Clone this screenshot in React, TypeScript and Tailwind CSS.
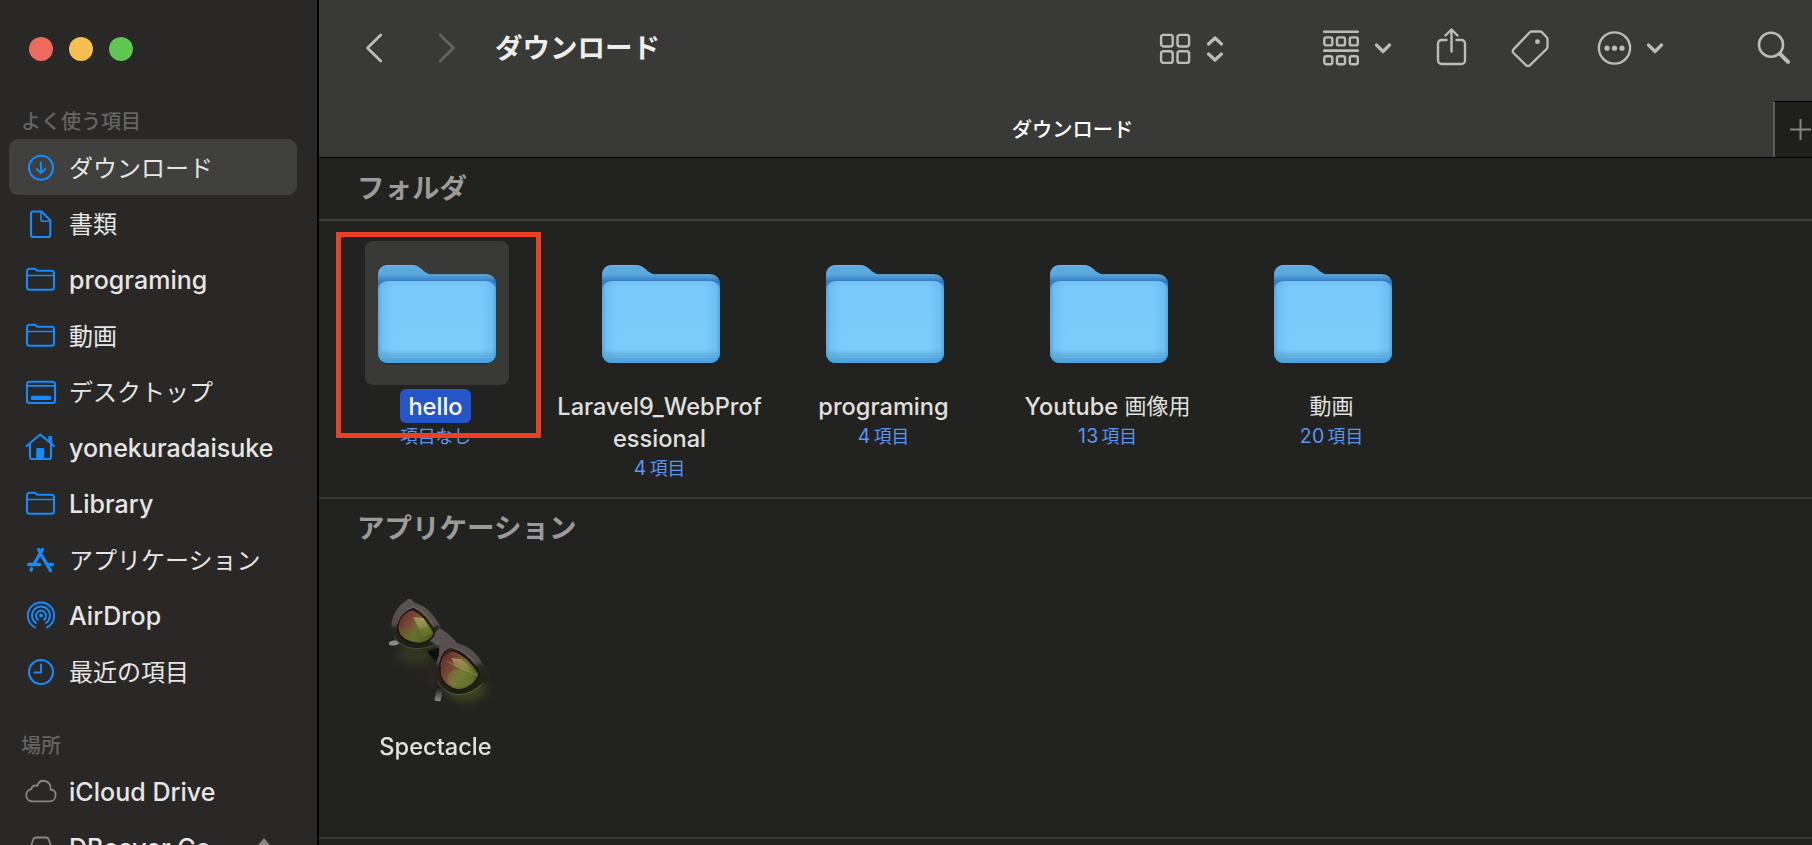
import React from "react";

type IconName = "download" | "doc" | "folder" | "desktop" | "home" | "apps" | "airdrop" | "clock" | "cloud" | "disk";

function SideIcon({ name }: { name: IconName }) {
  const common = { width: 32, height: 32, viewBox: "0 0 32 32", fill: "none", stroke: "currentColor", strokeWidth: 2.1, strokeLinecap: "round" as const, strokeLinejoin: "round" as const };
  switch (name) {
    case "download":
      return (
        <svg {...common}>
          <circle cx="16" cy="15.700" r="12" />
          <path d="M16 10.500v10.500M11.800 17l4.200 4.200 4.200-4.200" strokeWidth="1.900" />
        </svg>
      );
    case "doc":
      return (
        <svg {...common}>
          <path d="M8 3.500H16.500L25.300 12.300V27a2 2 0 0 1-2 2H8a2 2 0 0 1-2-2V5.500a2 2 0 0 1 2-2z" />
          <path d="M16 3.800v7.700a1.800 1.800 0 0 0 1.800 1.800H25" strokeWidth="1.600" />
        </svg>
      );
    case "folder":
      return (
        <svg {...common}>
          <path d="M2 7.300a2.500 2.500 0 0 1 2.500-2.500h4.500c2 0 2 2 4.500 2h13a2.500 2.500 0 0 1 2.500 2.500v14a2.500 2.500 0 0 1-2.500 2.500h-22a2.500 2.500 0 0 1-2.500-2.500z" />
          <path d="M2 11.500h27" strokeWidth="1.700" />
        </svg>
      );
    case "desktop":
      return (
        <svg {...common}>
          <rect x="2" y="5.700" width="28" height="21.300" rx="2.500" />
          <path d="M2 9.800h28" strokeWidth="1.700" />
          <rect x="6" y="19.700" width="20" height="4.300" rx="1" fill="currentColor" stroke="none" />
        </svg>
      );
    case "home":
      return (
        <svg {...common}>
          <path d="M1.500 14L15.300 2.500l13.700 11.500M24.300 9.500V5h1.700v6" />
          <path d="M5 12v13a2 2 0 0 0 2 2h17a2 2 0 0 0 2-2V12" />
          <rect x="11.200" y="16" width="8" height="11" rx="1" fill="currentColor" stroke="none" />
        </svg>
      );
    case "apps":
      return (
        <svg {...common} strokeWidth="3.300">
          <path d="M13.500 5.500l1.500 2.500M17.500 5.500L9.300 19.500M16.600 11.500L25.500 26.500M6.600 24.700l-.600 1.300M3.700 20.500h11M22.500 20.500h5" />
        </svg>
      );
    case "airdrop":
      return (
        <svg {...common} strokeWidth="1.900">
          <circle cx="16" cy="15.500" r="2" fill="currentColor" stroke="none" />
          <path d="M13 19.700a5 5 0 1 1 6 0M11 23a9 9 0 1 1 10 0M10 27.400a13.200 13.200 0 1 1 12 0" />
        </svg>
      );
    case "clock":
      return (
        <svg {...common}>
          <circle cx="16" cy="16" r="12" />
          <path d="M16 8.500v8H9.500" strokeWidth="1.900" />
        </svg>
      );
    case "cloud":
      return (
        <svg {...common} strokeWidth="1.800">
          <path d="M7 25.300a6.100 6.100 0 0 1-.700-12.100c.300-3.200 3.400-4.500 5.800-3.300 1.400-3.700 4.400-5.700 7.900-4.900 3.900.800 6.200 4.400 5.600 8.500 3.300.500 5.200 3 5 6-.300 3.300-2.700 5.800-5.600 5.800z" />
        </svg>
      );
    case "disk":
      return (
        <svg {...common} strokeWidth="1.800">
          <path d="M5 17l3-9a3.500 3.500 0 0 1 3.300-2.500h9.400a3.500 3.500 0 0 1 3.300 2.500L27 17v8H5z" />
        </svg>
      );
  }
}

const favorites: { icon: IconName; label: string; latin?: boolean; active?: boolean }[] = [
  { icon: "download", label: "ダウンロード", active: true },
  { icon: "doc", label: "書類" },
  { icon: "folder", label: "programing", latin: true },
  { icon: "folder", label: "動画" },
  { icon: "desktop", label: "デスクトップ" },
  { icon: "home", label: "yonekuradaisuke", latin: true },
  { icon: "folder", label: "Library", latin: true },
  { icon: "apps", label: "アプリケーション" },
  { icon: "airdrop", label: "AirDrop", latin: true },
  { icon: "clock", label: "最近の項目" },
];

function SideRow({ icon, label, latin, active, gray, eject }: { icon: IconName; label: string; latin?: boolean; active?: boolean; gray?: boolean; eject?: boolean }) {
  return (
    <li className={`flex h-14 shrink-0 items-center rounded-[9px] pl-4 pt-[2px] ${active ? "bg-[#40403e]" : ""}`}>
      <span className={gray ? "text-[#878786]" : "text-[#158bff]"}>
        <SideIcon name={icon} />
      </span>
      <span className={`ml-3 whitespace-nowrap text-[#e6e6e5] ${latin ? "pt-[2px] text-[25px] font-medium tracking-[0.03px]" : "pt-px text-[24px]"}`}>{label}</span>
      {eject && (
        <svg className="ml-auto mr-6" width="18" height="20" viewBox="0 0 18 20" fill="#878786">
          <path d="M9 0l8 9.500H1zM1 13h16v3H1z" />
        </svg>
      )}
    </li>
  );
}

function Sidebar() {
  return (
    <aside className="flex w-[319px] shrink-0 flex-col overflow-hidden border-r-2 border-black bg-[#292827] pl-[9px] pr-[20px]">
      <div className="flex shrink-0 gap-4 pl-5 pt-[37px]">
        <i className="size-6 rounded-full bg-[#ed6a5e]" />
        <i className="size-6 rounded-full bg-[#f5bf4f]" />
        <i className="size-6 rounded-full bg-[#61c554]" />
      </div>
      <h2 className="mt-[46px] h-[32px] shrink-0 pl-[12px] text-[20px] font-medium leading-[30px] text-[#656564]">よく使う項目</h2>
      <ul className="flex shrink-0 flex-col">
        {favorites.map((f) => (
          <SideRow key={f.label} {...f} />
        ))}
      </ul>
      <h2 className="mt-8 h-8 shrink-0 pl-[12px] text-[20px] font-medium leading-[30px] text-[#656564]">場所</h2>
      <ul className="flex shrink-0 flex-col">
        <SideRow icon="cloud" label="iCloud Drive" latin gray />
        <SideRow icon="disk" label="DBeaver Co…" latin gray eject />
      </ul>
    </aside>
  );
}

function ChevronDown() {
  return (
    <svg width="18" height="14" viewBox="0 0 18 14" fill="none" stroke="currentColor" strokeWidth="3.200" strokeLinecap="round" strokeLinejoin="round">
      <path d="M2.500 4L9 10.500l6.500-6.500" />
    </svg>
  );
}

function Toolbar() {
  return (
    <div className="flex h-24 items-center text-[#bcbcba]">
      <svg className="ml-[45px]" width="20" height="32" viewBox="0 0 20 32" fill="none" stroke="currentColor" strokeWidth="2.800" strokeLinecap="round" strokeLinejoin="round">
        <path d="M16.700 3L3.500 16 16.700 29" />
      </svg>
      <svg className="ml-[53px] text-[#636361]" width="20" height="32" viewBox="0 0 20 32" fill="none" stroke="currentColor" strokeWidth="2.800" strokeLinecap="round" strokeLinejoin="round">
        <path d="M3.300 3l13.200 13L3.300 29" />
      </svg>
      <h1 className="ml-[38px] w-[664px] text-[27.5px] font-bold leading-10 text-[#eeeeec]">ダウンロード</h1>
      <svg width="32" height="32" viewBox="0 0 32 32" fill="none" stroke="currentColor" strokeWidth="2.400">
        <rect x="2.100" y="2.900" width="11.600" height="11.600" rx="2.500" />
        <rect x="18.500" y="2.900" width="11.600" height="11.600" rx="2.500" />
        <rect x="2.100" y="19.300" width="11.600" height="11.600" rx="2.500" />
        <rect x="18.500" y="19.300" width="11.600" height="11.600" rx="2.500" />
      </svg>
      <svg className="ml-[15px]" width="18" height="32" viewBox="0 0 18 32" fill="none" stroke="currentColor" strokeWidth="3.200" strokeLinecap="round" strokeLinejoin="round">
        <path d="M2.500 12L9 6l6.500 6M2.500 22L9 28l6.500-6" />
      </svg>
      <svg className="ml-[99px]" width="36" height="36" viewBox="0 0 36 36" fill="none" stroke="currentColor" strokeWidth="2.400">
        <path d="M1.200 1.700h33.600M1.200 20.600h33.600" strokeLinecap="round" strokeWidth="2.600" />
        {[7.4, 26.2].map((y) =>
          [1.3, 14, 26.8].map((x) => <rect key={`${x}-${y}`} x={x} y={y} width="8" height="8" rx="2" />)
        )}
      </svg>
      <div className="ml-[15px]"><ChevronDown /></div>
      <svg className="ml-[43px] mb-[5px]" width="34" height="40" viewBox="0 0 34 40" fill="none" stroke="currentColor" strokeWidth="2.400" strokeLinecap="round" strokeLinejoin="round">
        <path d="M11.500 14H6.500a3.500 3.500 0 0 0-3.500 3.500v17a3.500 3.500 0 0 0 3.500 3.500h20a3.500 3.500 0 0 0 3.500-3.500v-17a3.500 3.500 0 0 0-3.500-3.500h-5" />
        <path d="M16.500 25.500V4M10.500 9.500L16.500 3.500l6 6" />
      </svg>
      <svg className="ml-[42px]" width="40" height="40" viewBox="0 0 40 40" fill="none" stroke="currentColor" strokeWidth="2.300" strokeLinejoin="round">
        <path d="M20.500 3.500h8.500a2.500 2.500 0 0 1 1.800.700l5 5a2.500 2.500 0 0 1 .700 1.800v8a2.500 2.500 0 0 1-.700 1.800L18.800 37.400a2.500 2.500 0 0 1-3.600 0L2.500 25a2.500 2.500 0 0 1 0-3.600L18.800 4.300a2.500 2.500 0 0 1 1.700-.800z" />
        <circle cx="26.500" cy="13.700" r="2.400" fill="currentColor" stroke="none" />
      </svg>
      <svg className="ml-[46px]" width="36" height="36" viewBox="0 0 36 36" fill="none" stroke="currentColor" strokeWidth="2.400">
        <circle cx="17.500" cy="18" r="15.600" />
        <g fill="currentColor" stroke="none">
          <circle cx="10" cy="18.200" r="2.600" />
          <circle cx="17.500" cy="18.200" r="2.600" />
          <circle cx="25" cy="18.200" r="2.600" />
        </g>
      </svg>
      <div className="ml-[13px]"><ChevronDown /></div>
      <svg className="ml-[92px]" width="36" height="36" viewBox="0 0 36 36" fill="none" stroke="currentColor" strokeLinecap="round">
        <circle cx="15" cy="14.700" r="12" strokeWidth="2.600" />
        <path d="M24 23.800l8 8" strokeWidth="4" />
      </svg>
    </div>
  );
}

function TabBar() {
  return (
    <div className="flex h-[61px] items-end">
      <div className="flex h-[56px] flex-1 items-center justify-center pt-[2px] text-[20.3px] font-medium text-white">
        <span className="pl-[53px]">ダウンロード</span>
      </div>
      <div className="flex h-[56px] w-[39px] justify-end border-l-2 border-t border-l-[#5b5b59] border-t-black bg-[#1f1f1d]">
        <svg width="23" height="55" viewBox="0 0 23 55" stroke="#858583" strokeWidth="2">
          <path d="M1 27.500h21M11.500 17v21" />
        </svg>
      </div>
    </div>
  );
}

function FolderIcon() {
  return (
    <svg width="144" height="144" viewBox="0 0 144 144">
      <defs>
        <linearGradient id="back" x1="0" y1="0" x2="0" y2="1">
          <stop offset="0" stopColor="#5fade0" />
          <stop offset=".1" stopColor="#58a6dc" />
          <stop offset=".17" stopColor="#3479c2" />
          <stop offset=".3" stopColor="#4b9fdb" />
          <stop offset="1" stopColor="#459bd6" />
        </linearGradient>
        <linearGradient id="front" x1="0" y1="0" x2="0" y2="1">
          <stop offset="0" stopColor="#73c2f2" />
          <stop offset=".1" stopColor="#7bcbfa" />
          <stop offset=".82" stopColor="#7dcdfb" />
          <stop offset=".87" stopColor="#72c0ef" />
          <stop offset=".88" stopColor="#65b3e3" />
          <stop offset=".9" stopColor="#70bdea" />
          <stop offset=".91" stopColor="#5eacdf" />
          <stop offset=".93" stopColor="#66b6e6" />
          <stop offset=".95" stopColor="#50a5df" />
          <stop offset="1" stopColor="#4b9fdb" />
        </linearGradient>
        <linearGradient id="side" x1="0" y1="0" x2="1" y2="0">
          <stop offset="0" stopColor="#3a90d0" stopOpacity=".65" />
          <stop offset=".03" stopColor="#4b9fdb" stopOpacity=".28" />
          <stop offset=".13" stopColor="#4b9fdb" stopOpacity="0" />
          <stop offset=".87" stopColor="#4b9fdb" stopOpacity="0" />
          <stop offset=".97" stopColor="#4b9fdb" stopOpacity=".28" />
          <stop offset="1" stopColor="#3a90d0" stopOpacity=".65" />
        </linearGradient>
      </defs>
      <rect x="14" y="60" width="116" height="63.500" rx="9" fill="#000" opacity=".25" />
      <path d="M13 33a9 9 0 0 1 9-9h25c9 0 11 9.300 20 9.300h55a9 9 0 0 1 9 9V113a9 9 0 0 1-9 9H22a9 9 0 0 1-9-9z" fill="url(#back)" />
      <path d="M15 32a8 8 0 0 1 7-7.600h25c5 0 8 2.600 11 5M67 33.800h55" stroke="#7cc3ee" strokeOpacity=".5" strokeWidth=".8" fill="none" />
      <path d="M13.300 49a9 9 0 0 1 9-9h99.400a9 9 0 0 1 9 9V113a9 9 0 0 1-9 9H22.300a9 9 0 0 1-9-9z" fill="url(#front)" />
      <path d="M13.300 49a9 9 0 0 1 9-9h99.400a9 9 0 0 1 9 9V113a9 9 0 0 1-9 9H22.300a9 9 0 0 1-9-9z" fill="url(#side)" />
    </svg>
  );
}

function SunglassesIcon() {
  return (
    <svg width="144" height="144" viewBox="45 243 432 432">
      <defs>
        <linearGradient id="frame" x1="0" y1="0" x2="0" y2="1">
          <stop offset="0" stopColor="#5a5351" />
          <stop offset=".5" stopColor="#544c4a" />
          <stop offset=".58" stopColor="#272822" />
          <stop offset="1" stopColor="#1a2010" />
        </linearGradient>
        <linearGradient id="lens" x1="0" y1=".2" x2="1" y2=".8">
          <stop offset="0" stopColor="#642d26" />
          <stop offset=".3" stopColor="#794636" />
          <stop offset=".55" stopColor="#716e38" />
          <stop offset="1" stopColor="#42551d" />
        </linearGradient>
        <linearGradient id="glare" x1="0" y1="0" x2="0" y2="1">
          <stop offset="0" stopColor="#dbd78c" stopOpacity=".5" />
          <stop offset="1" stopColor="#a9b94a" stopOpacity=".12" />
        </linearGradient>
        <linearGradient id="temple" x1="0" y1="0" x2="0" y2="1">
          <stop offset="0" stopColor="#141513" />
          <stop offset="1" stopColor="#8b8c88" />
        </linearGradient>
        <filter id="soft" x="-60%" y="-60%" width="220%" height="220%" colorInterpolationFilters="sRGB">
          <feGaussianBlur stdDeviation="16" />
        </filter>
      </defs>
      <g filter="url(#soft)">
        <ellipse cx="195" cy="462" rx="58" ry="32" fill="#3a4122" opacity=".7" />
        <ellipse cx="245" cy="530" rx="18" ry="28" fill="#4e2a20" opacity=".5" />
        <ellipse cx="348" cy="568" rx="60" ry="34" fill="#46511f" opacity=".8" />
      </g>
      <path d="M120 424q34-14 82-8l74 14 4 12-60 2q-50-20-80-12-12 6-21 4-8-4 1-12z" fill="#30312e" />
      <path d="M119 425q10-5 26-3l2 10q-12 6-26 4-7-5-2-11z" fill="#8b8c88" />
      <path d="M232 452l48-10-12 50q-26-16-36-40z" fill="#0e0f0d" />
      <path d="M262 560h18l-8 42q-10 5-19-2z" fill="url(#temple)" />
      <path d="M168 302q8-10 18-2l8 8q44 12 72 62l14 22-8 32q-26 24-72 24-50-4-68-36-14-32-2-64 12-30 38-46z" fill="url(#frame)" />
      <path d="M268 384q30 16 54 46 38 8 64 42 16 30 34 46 0 14-4 24l-28 14q-26 28-68 28-42-8-58-46-14-38 4-70l2-28-32-20z" fill="url(#frame)" />
      <path d="M190 323q44 22 66 78-10 26-46 31-44 2-66-28-10-30 8-56 14-18 38-25z" fill="#1c1512" />
      <path d="M188 331q42 20 63 70-12 22-42 27-38 0-59-26-10-26 4-48 12-18 34-23z" fill="url(#lens)" />
      <path d="M190 352l30 2 26 44-28 14z" fill="url(#glare)" />
      <path d="M144 380q50 12 98 0l9 20q-12 24-42 28-38 0-58-26z" fill="#58701c" opacity=".35" />
      <path d="M306 444q50 16 86 78-18 44-66 50-42-6-56-44-10-42 12-72 10-10 24-12z" fill="#1e1310" />
      <path d="M308 453q44 14 78 70-16 40-60 45-38-6-52-40-8-40 14-64 8-8 20-11z" fill="url(#lens)" />
      <path d="M304 474l30 4 50 46-68-24z" fill="url(#glare)" />
      <ellipse cx="332" cy="534" rx="40" ry="28" fill="#7c9434" opacity=".35" />
      <path d="M290 484l92 43" stroke="#c9bc5e" strokeWidth="2" opacity=".6" />
      <path d="M132 410q20 34 66 36 44 0 70-22M262 544q20 36 62 40 46-2 74-34" stroke="#85877e" strokeWidth="2.500" opacity=".55" fill="none" />
      <path d="M142 370q12-38 46-48 40 6 66 60M272 500q6-44 36-54 40 4 74 50" stroke="#a39491" strokeWidth="2.500" opacity=".45" fill="none" />
    </svg>
  );
}

function Count({ n }: { n: string }) {
  return (
    <p className="flex h-[27px] items-center gap-[3px] whitespace-nowrap pt-[5px] text-[17.8px] text-[#5b95f2]">
      {n && <span className="text-[19.500px] tracking-[0.3px]">{n}</span>}
      <span>{n ? "項目" : "項目なし"}</span>
    </p>
  );
}

const folders = [
  { lines: ["hello"], cjk: "", count: "", selected: true },
  { lines: ["Laravel9_WebProf", "essional"], cjk: "", count: "4" },
  { lines: ["programing"], cjk: "", count: "4" },
  { lines: ["Youtube "], cjk: "画像用", count: "13" },
  { lines: [""], cjk: "動画", count: "20" },
];

function SectionTitle({ children, className }: { children: React.ReactNode; className: string }) {
  return <h3 className={`pl-[38px] text-[27.5px] font-bold text-[#9b9b99] ${className}`}>{children}</h3>;
}

export default function App() {
  return (
    <div className="flex h-[845px] w-[1812px] overflow-hidden bg-[#222220] font-['Inter','Noto_Sans_CJK_JP',sans-serif]">
      <Sidebar />
      <main className="flex min-w-0 flex-1 flex-col">
        <header className="h-[158px] shrink-0 border-b border-black bg-[#393937]">
          <Toolbar />
          <TabBar />
        </header>
        <section className="h-[341px] shrink-0 border-b-2 border-[#373735]">
          <SectionTitle className="h-[63px] border-b-2 border-[#3d3d3b] bg-[#22231e] leading-[60px]">フォルダ</SectionTitle>
          <div className="relative flex pl-[6px] pt-5">
            {folders.map((f, i) => (
              <div key={i} className="flex w-56 shrink-0 flex-col items-center">
                <div className={`size-36 rounded-lg ${f.selected ? "bg-[#393937]" : ""}`}>
                  <FolderIcon />
                </div>
                <div className="mt-1 flex flex-col items-center pr-[3px] text-[#e0e0de]">
                  {f.lines.map((line) => (
                    <p
                      key={line}
                      className={`flex items-center whitespace-pre text-[23.6px] font-medium ${f.selected ? "mb-[-2px] h-[34px] rounded-md bg-[#2456c9] px-[8px] pt-[2px] text-white" : "h-8 pt-[3px]"}`}
                    >
                      {line}
                      {f.cjk && <span className="text-[22px] font-normal">{f.cjk}</span>}
                    </p>
                  ))}
                  <Count n={f.count} />
                </div>
              </div>
            ))}
            <div className="absolute left-[17px] top-[11px] h-[206px] w-[205px] border-[5px] border-[#eb4024]" />
          </div>
        </section>
        <section className="h-[340px] shrink-0 border-b-2 border-[#373735]">
          <SectionTitle className="h-[60px] leading-[59px]">アプリケーション</SectionTitle>
          <div className="flex pl-[6px] pt-[22px]">
            <div className="flex w-56 flex-col items-center">
              <SunglassesIcon />
              <p className="mt-1 flex h-8 items-center pr-[3px] pt-[3px] text-[23.6px] font-medium text-[#e0e0de]">Spectacle</p>
            </div>
          </div>
        </section>
      </main>
    </div>
  );
}
